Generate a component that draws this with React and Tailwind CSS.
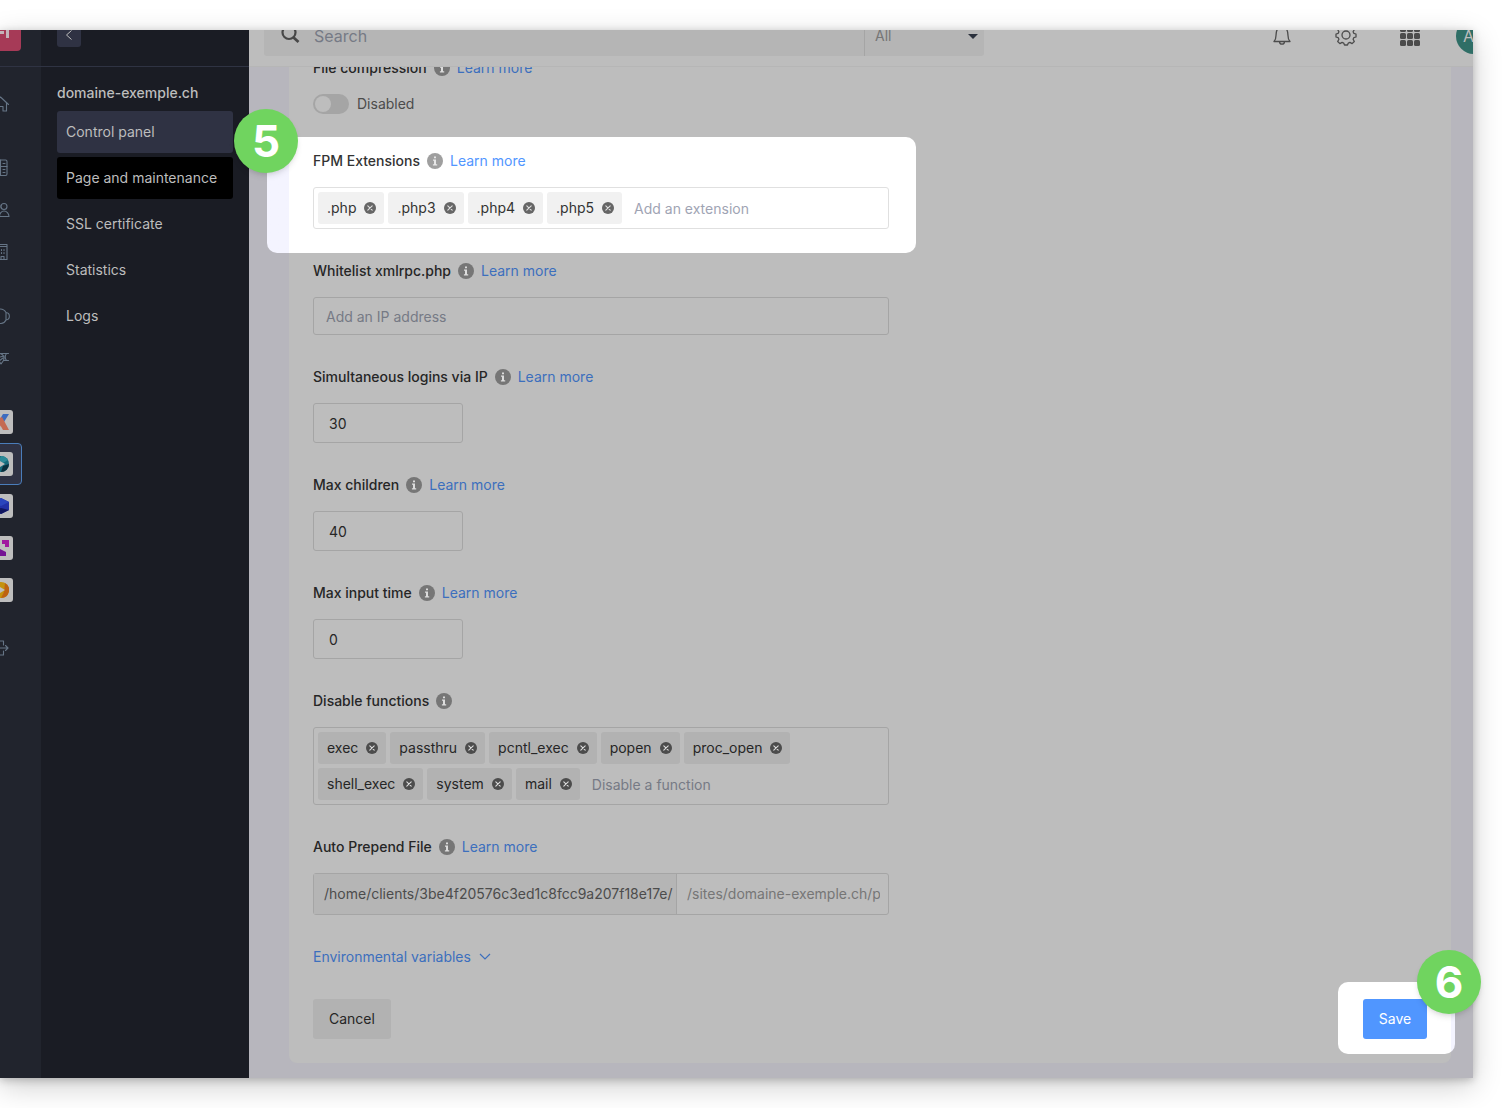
import { useState } from "react";

function InfoIcon() {
  return (
    <svg viewBox="0 0 16 16" className="size-4 shrink-0" aria-hidden="true">
      <circle cx="8" cy="8" r="8" className="fill-current" />
      <path d="M7 3.4h2v1.9H7zM6 6.6h3v4.6h1.2v1.2H5.9v-1.2H7V7.8H6z" fill="#fff" fillOpacity="0.75" />
    </svg>
  );
}

function CrossIcon() {
  return (
    <svg viewBox="0 0 12 12" className="size-3" aria-hidden="true">
      <circle cx="6" cy="6" r="6" className="fill-current" />
      <path d="M3.800 3.800l4.400 4.400M8.200 3.800l-4.400 4.400" stroke="#fff" strokeOpacity="0.8" strokeWidth="1.100" strokeLinecap="round" />
    </svg>
  );
}

function Label({ htmlFor, children, link = true, bright = false }) {
  return (
    <div className="flex h-5 items-center gap-[7px]">
      <label htmlFor={htmlFor} className={bright ? "font-medium text-[#333]" : "font-medium text-[#262626]"}>
        {children}
      </label>
      <span className={bright ? "text-[#9f9f9f]" : "text-[#767676]"}>
        <InfoIcon />
      </span>
      {link && (
        <a href="#" className={bright ? "text-[#5196ff]" : "text-[#3c6fbd]"}>
          Learn more
        </a>
      )}
    </div>
  );
}

function TagInput({ id, initial, placeholder, bright = false }) {
  const [tags, setTags] = useState(initial);

  return (
    <div
      className={
        bright
          ? "flex w-full max-w-xl flex-wrap gap-1 rounded-[3px] border border-[#e0e0e0] p-1 text-[#333]"
          : "flex w-full max-w-xl flex-wrap gap-1 rounded-[3px] border border-[#a5a5a5] p-1 text-[#262626]"
      }
    >
      {tags.map((tag) => (
        <span
          key={tag}
          className={
            bright
              ? "flex h-8 items-center gap-2 rounded-[3px] bg-[#f1f1f1] pr-2 pl-[9px]"
              : "flex h-8 items-center gap-2 rounded-[3px] bg-[#b2b2b2] pr-2 pl-[9px]"
          }
        >
          {tag}
          <button
            type="button"
            aria-label={`Remove ${tag}`}
            onClick={() => setTags(tags.filter((t) => t !== tag))}
            className={bright ? "cursor-pointer text-[#666]" : "cursor-pointer text-[#4c4c4c]"}
          >
            <CrossIcon />
          </button>
        </span>
      ))}
      <input
        id={id}
        placeholder={placeholder}
        className={
          bright
            ? "h-8 min-w-32 flex-1 px-2 outline-none placeholder:text-[#9fa4b4]"
            : "h-8 min-w-32 flex-1 px-2 outline-none placeholder:text-[#767a85]"
        }
      />
    </div>
  );
}

function NumberField({ id, label, value }) {
  return (
    <div className="flex flex-col gap-4">
      <Label htmlFor={id}>{label}</Label>
      <input
        id={id}
        defaultValue={value}
        className="h-10 w-[150px] rounded-[3px] border border-[#a5a5a5] px-[15px] text-[#262626] outline-none"
      />
    </div>
  );
}

function RailIcon({ label, children }) {
  return (
    <a href="#" aria-label={label} className="flex h-[42px] w-full items-center justify-center">
      <svg viewBox="0 0 18 18" className="size-[18px]" fill="none" stroke="#667586" strokeWidth="1.1" strokeLinejoin="round" strokeLinecap="round">
        {children}
      </svg>
    </a>
  );
}

function AppTile({ label, active = false, children }) {
  return (
    <a
      href="#"
      aria-label={label}
      className={
        active
          ? "flex size-[42px] items-center justify-center rounded-[4px] border border-[#4a7dba] bg-[#2f3243]"
          : "flex size-[42px] items-center justify-center"
      }
    >
      <span className="flex size-6 items-center justify-center rounded-[3px] bg-[#bdbdbd]">
        <svg viewBox="0 0 16 16" className="size-4">{children}</svg>
      </span>
    </a>
  );
}

function Rail() {
  return (
    <div className="w-[41px] shrink-0 bg-[#21242d]">
      <div className="-ml-[39px] flex w-20 flex-col items-center">
        <div className="flex h-[37px] w-full justify-center border-b border-[#2f3343]">
          <div className="-mt-[19px] flex size-10 items-center justify-end rounded-[4px] bg-[#a63a57]">
            <svg viewBox="0 0 20 20" className="size-5 -translate-x-2">
              <path d="M2 11.500h9M14.500 4v13" stroke="#c4b4ba" strokeWidth="3" fill="none" />
            </svg>
          </div>
        </div>
        <nav className="flex w-full flex-col items-center pt-4">
          <RailIcon label="Home">
            <path d="M1 9.500 8.500 2 16.500 9.500M3.500 7.500V16H7V11.500h4V16h3.500V7.500" />
          </RailIcon>
          <div className="mt-[22px] w-full">
            <RailIcon label="Products">
              <rect x="2" y="1" width="13" height="15.500" rx="1.500" />
              <path d="M8.500 1v15.500M8.500 7.500h6.500M11 4.500h2M11 10.500h2M11 13.500h2" />
            </RailIcon>
            <RailIcon label="Users">
              <circle cx="12" cy="5.500" r="3" />
              <path d="M7.500 15.500c0-3 2-5.500 4.500-5.500s5 2.500 5 5.500zM1 15.500c0-3 1.500-5 4-5.500M5 2.500a3 3 0 0 1 0 6" />
            </RailIcon>
            <RailIcon label="Organisation">
              <path d="M3 3.500v13h12v-15H3v2h12M7 6.500v1M9.500 6.500v1M12 6.500v1M7 9.500v1M9.500 9.500v1M12 9.500v1M9 16.500v-3h3v3" />
            </RailIcon>
          </div>
          <div className="mt-[22px] w-full">
            <RailIcon label="Support">
              <path d="M1 9a7 7 0 0 1 13-3.500v7.500a6 6 0 0 1-5 3.500H7M14 5.500c4.500.5 4.500 7 0 7.500" />
            </RailIcon>
            <RailIcon label="News">
              <path d="M1 8l7-3.500h8.500M14.500 4.500c-1.500 2-1.500 5 0 7M16.500 11.500h-5L9 15l-2-3M8 4.500c3 1 5 3 3.500 7M8 8l4-1M7 12l4-3" />
            </RailIcon>
          </div>
          <div className="mt-[22px]">
            <AppTile label="kSuite">
              <path d="M0 0h5l3 5v6l-3 5H0l5-8z" fill="#c4685b" />
              <path d="M10 0h6l-5 8-4-3z" fill="#3d6cc0" />
              <path d="M7 4l2-1 7 13h-6L6 9z" fill="#c46a52" />
            </AppTile>
            <AppTile label="Hosting" active>
              <circle cx="8" cy="8" r="8" fill="#16697a" />
              <path d="M8 0a8 8 0 0 1 7 4l-5 3-4-3z" fill="#2c8a98" />
              <path d="M16 8a8 8 0 0 1-8 8l2-6z" fill="#0b2f3d" />
              <path d="M6 4.500 12 8l-6 3.500z" fill="#bdbdbd" />
            </AppTile>
            <AppTile label="Domains">
              <path d="M8 0l8 4v8l-8 4-8-4V4z" fill="#2231a6" />
              <path d="M8 0l8 4-8 4-8-4z" fill="#2a45bd" />
              <path d="M8 16l8-4-8-2-8 2z" fill="#11165f" />
            </AppTile>
            <AppTile label="Streaming">
              <path d="M9 0h7v7h-4V4H9zM0 9h4v3h7v4H0z" fill="#a0179f" />
              <path d="M7 9l6 3v4H4z" fill="#741394" />
            </AppTile>
            <AppTile label="Events">
              <circle cx="8" cy="8" r="8" fill="#c4920d" />
              <path d="M12 1a8 8 0 0 1-4 15l3-6z" fill="#bd6212" />
              <path d="M6 4.500 12 8l-6 3.500z" fill="#bdbdbd" />
            </AppTile>
          </div>
          <div className="mt-4 w-full">
            <RailIcon label="Sign out">
              <path d="M11.500 6V2H2v14h9.500v-4M7 9h9M13.500 6.500 16 9l-2.500 2.500" />
            </RailIcon>
          </div>
        </nav>
      </div>
    </div>
  );
}

const links = ["Control panel", "Page and maintenance", "SSL certificate", "Statistics", "Logs"];

function Sidebar() {
  return (
    <aside className="flex w-52 shrink-0 flex-col bg-[#1a1c24] text-[#bdbdbd]">
      <div className="h-[37px] border-b border-[#2f3343] px-4">
        <button type="button" aria-label="Back" className="-mt-[7px] flex size-6 items-center justify-center rounded-[3px] bg-[#2f3243]">
          <svg viewBox="0 0 12 12" className="size-3" fill="none" stroke="#bdbdbd">
            <path d="M8.500 1.500 3.500 6l5 4.500" />
          </svg>
        </button>
      </div>
      <nav className="flex flex-col gap-1 px-4 pt-4">
        <h2 className="mb-1 h-5 font-medium">domaine-exemple.ch</h2>
        {links.map((link, i) => (
          <a
            key={link}
            href="#"
            className={
              i === 0
                ? "flex h-[42px] items-center rounded-[3px] bg-[#2f3243] px-[9px]"
                : i === 1
                  ? "flex h-[42px] items-center rounded-[3px] bg-black px-[9px]"
                  : "flex h-[42px] items-center rounded-[3px] px-[9px]"
            }
          >
            {link}
          </a>
        ))}
      </nav>
    </aside>
  );
}

function TopBar() {
  return (
    <header className="h-[37px] shrink-0 border-b border-[#b6b6b6] bg-[#bdbdbd]">
      <div className="-mt-6 flex h-[60px] items-center pl-[15px]">
        <div className="flex h-10 w-[720px] rounded-[3px] bg-[#b5b5b5]">
          <label htmlFor="search" className="flex w-[50px] items-center pl-[17px]">
            <svg viewBox="0 0 20 20" className="size-5" fill="none" stroke="#484848" aria-label="Search">
              <circle cx="8" cy="6.500" r="6.500" strokeWidth="2.200" />
              <path d="M12.500 11.500l5 4.500" strokeWidth="2.800" />
            </svg>
          </label>
          <input id="search" placeholder="Search" className="min-w-0 flex-1 text-base outline-none placeholder:text-[#767a85]" />
          <div className="relative w-[120px] border-l border-[#a5a5a5]">
            <select aria-label="Search scope" className="size-full appearance-none pl-[10px] text-[#767676] outline-none">
              <option>All</option>
            </select>
            <svg viewBox="0 0 10 5" className="pointer-events-none absolute top-[18px] right-[6px] h-[5px] w-[10px]">
              <path d="M0 0h10L5 5z" fill="#2a303c" />
            </svg>
          </div>
        </div>
        <div className="ml-auto flex items-center text-[#4c4c4c]">
          <button type="button" aria-label="Notifications" className="flex w-16 justify-center">
            <svg viewBox="0 0 20 20" className="size-5" fill="none" stroke="currentColor" strokeWidth="1.300" strokeLinejoin="round" strokeLinecap="round">
              <path d="M2 15.500h16c-1.500-1.500-2-3-2-6C16 4 14 1 10 1S4 4 4 9.500c0 3-.5 4.500-2 6zM7.500 15.500a2.500 2.700 0 0 0 5 0" />
            </svg>
          </button>
          <button type="button" aria-label="Settings" className="flex w-16 justify-center">
            <svg viewBox="0 0 24 24" className="size-6" fill="none" stroke="currentColor" strokeWidth="1.300" strokeLinejoin="round">
              <circle cx="12" cy="11" r="4" />
              <path d="M10.500 1.500h3l.7 2.500 1.500.6L18 3.400 20.300 5.600l-1.200 2.200.7 1.500 2.200.7v3l-2.200.7-.7 1.500 1.200 2.300-2.200 2.100-2.200-1.200-1.600.7-.8 1.900h-3l-.8-1.900-1.600-.7-2.200 1.200-2.200-2.100 1.200-2.300-.7-1.500L2 13v-3l2.200-.7.7-1.500-1.200-2.200L6 3.400l2.300 1.200L9.800 4z" />
            </svg>
          </button>
          <button type="button" aria-label="Apps" className="flex w-16 justify-center">
            <svg viewBox="0 0 20 20" className="size-5" fill="currentColor">
              {[0, 7, 14].map((y) =>
                [0, 7, 14].map((x) => <rect key={`${x}-${y}`} x={x} y={y} width="6" height="6" rx="1.500" />)
              )}
            </svg>
          </button>
          <button type="button" aria-label="Account" className="-mr-[19px] ml-[14px] flex size-9 items-center rounded-full bg-[#2f6e66] pl-[7px] text-base text-[#bdbdbd]">
            A
          </button>
        </div>
      </div>
    </header>
  );
}

function Settings() {
  return (
    <form className="-mt-[9px] flex flex-col gap-8 px-6 pb-6">
      <div className="flex flex-col gap-4 pb-[5px]">
        <Label htmlFor="compression">File compression</Label>
        <div className="flex h-5 items-center gap-2 text-[#4c4c4c]">
          <input
            id="compression"
            type="checkbox"
            role="switch"
            className="h-5 w-9 appearance-none rounded-full bg-[#a5a5a5] p-[2px] before:block before:size-4 before:rounded-full before:bg-[#bdbdbd] checked:before:translate-x-4"
          />
          <span>Disabled</span>
        </div>
      </div>

      <div className="-mt-[14px] -mb-6 -ml-[46px] w-[649px] rounded-[10px] bg-linear-to-r from-[#f4f4ff] from-[22px] to-white to-[22px] pt-[14px] pr-[27px] pb-6 pl-[46px]">
        <div className="flex flex-col gap-4">
          <Label htmlFor="fpm" bright>FPM Extensions</Label>
          <TagInput id="fpm" bright initial={[".php", ".php3", ".php4", ".php5"]} placeholder="Add an extension" />
        </div>
      </div>

      <div className="flex flex-col gap-4">
        <Label htmlFor="whitelist">Whitelist xmlrpc.php</Label>
        <input
          id="whitelist"
          placeholder="Add an IP address"
          className="h-[38px] w-full max-w-xl rounded-[3px] border border-[#a5a5a5] px-3 outline-none placeholder:text-[#767a85]"
        />
      </div>

      <NumberField id="logins" label="Simultaneous logins via IP" value="30" />
      <NumberField id="children" label="Max children" value="40" />
      <NumberField id="input-time" label="Max input time" value="0" />

      <div className="flex flex-col gap-4">
        <Label htmlFor="functions" link={false}>Disable functions</Label>
        <TagInput
          id="functions"
          initial={["exec", "passthru", "pcntl_exec", "popen", "proc_open", "shell_exec", "system", "mail"]}
          placeholder="Disable a function"
        />
      </div>

      <div className="flex flex-col gap-4">
        <Label htmlFor="prepend">Auto Prepend File</Label>
        <div className="flex h-[42px] w-full max-w-xl rounded-[3px] border border-[#a5a5a5]">
          <span className="flex w-[363px] shrink-0 items-center border-r border-[#a5a5a5] bg-[#b5b5b5] pl-[10px] text-[#4c4c4c]">
            /home/clients/3be4f20576c3ed1c8fcc9a207f18e17e/
          </span>
          <input
            id="prepend"
            placeholder="/sites/domaine-exemple.ch/prepend.php"
            className="mr-2 ml-[10px] min-w-0 flex-1 outline-none placeholder:text-[#767676]"
          />
        </div>
      </div>

      <button type="button" className="flex h-5 items-center gap-2 self-start text-[#3c6fbd]">
        Environmental variables
        <svg viewBox="0 0 12 8" className="h-2 w-3" fill="none" stroke="currentColor" strokeWidth="1.200">
          <path d="M1 1l5 5 5-5" />
        </svg>
      </button>

      <div className="flex items-start justify-between">
        <button type="button" className="h-10 rounded-[3px] bg-[#b2b2b2] px-4 text-[#262626]">
          Cancel
        </button>
        <div className="-mt-[17px] -mr-7 -mb-[15px] rounded-[10px] bg-linear-to-l from-[#f4f4ff] from-[4px] to-white to-[4px] pt-[17px] pr-7 pb-[15px] pl-[25px]">
          <button type="submit" className="h-10 w-16 rounded-[3px] bg-[#5096ff] text-white">
            Save
          </button>
        </div>
      </div>
    </form>
  );
}

export default function App() {
  return (
    <div className="min-h-screen overflow-hidden bg-white py-[30px] pr-[30px] font-['Inter','Liberation_Sans',sans-serif] text-sm">
      <div className="relative shadow-[0_2px_8px_rgba(0,0,0,0.22),0_8px_28px_rgba(0,0,0,0.2)]">
        <div className="flex overflow-hidden">
          <Rail />
          <Sidebar />
          <div className="flex min-w-0 flex-1 flex-col">
            <TopBar />
            <main className="overflow-hidden bg-[#b7b6bd] pr-[22px] pb-[15px] pl-10">
              <div className="rounded-b-lg bg-[#bdbdbd]">
                <Settings />
              </div>
            </main>
          </div>
        </div>
        <div className="absolute top-[79px] left-[234px] flex size-16 items-center justify-center rounded-full bg-[#70d45f] text-[44px] font-bold text-white shadow-md">
          5
        </div>
        <div className="absolute -right-2 bottom-16 flex size-16 items-center justify-center rounded-full bg-[#70d45f] text-[44px] font-bold text-white shadow-md">
          6
        </div>
      </div>
    </div>
  );
}
